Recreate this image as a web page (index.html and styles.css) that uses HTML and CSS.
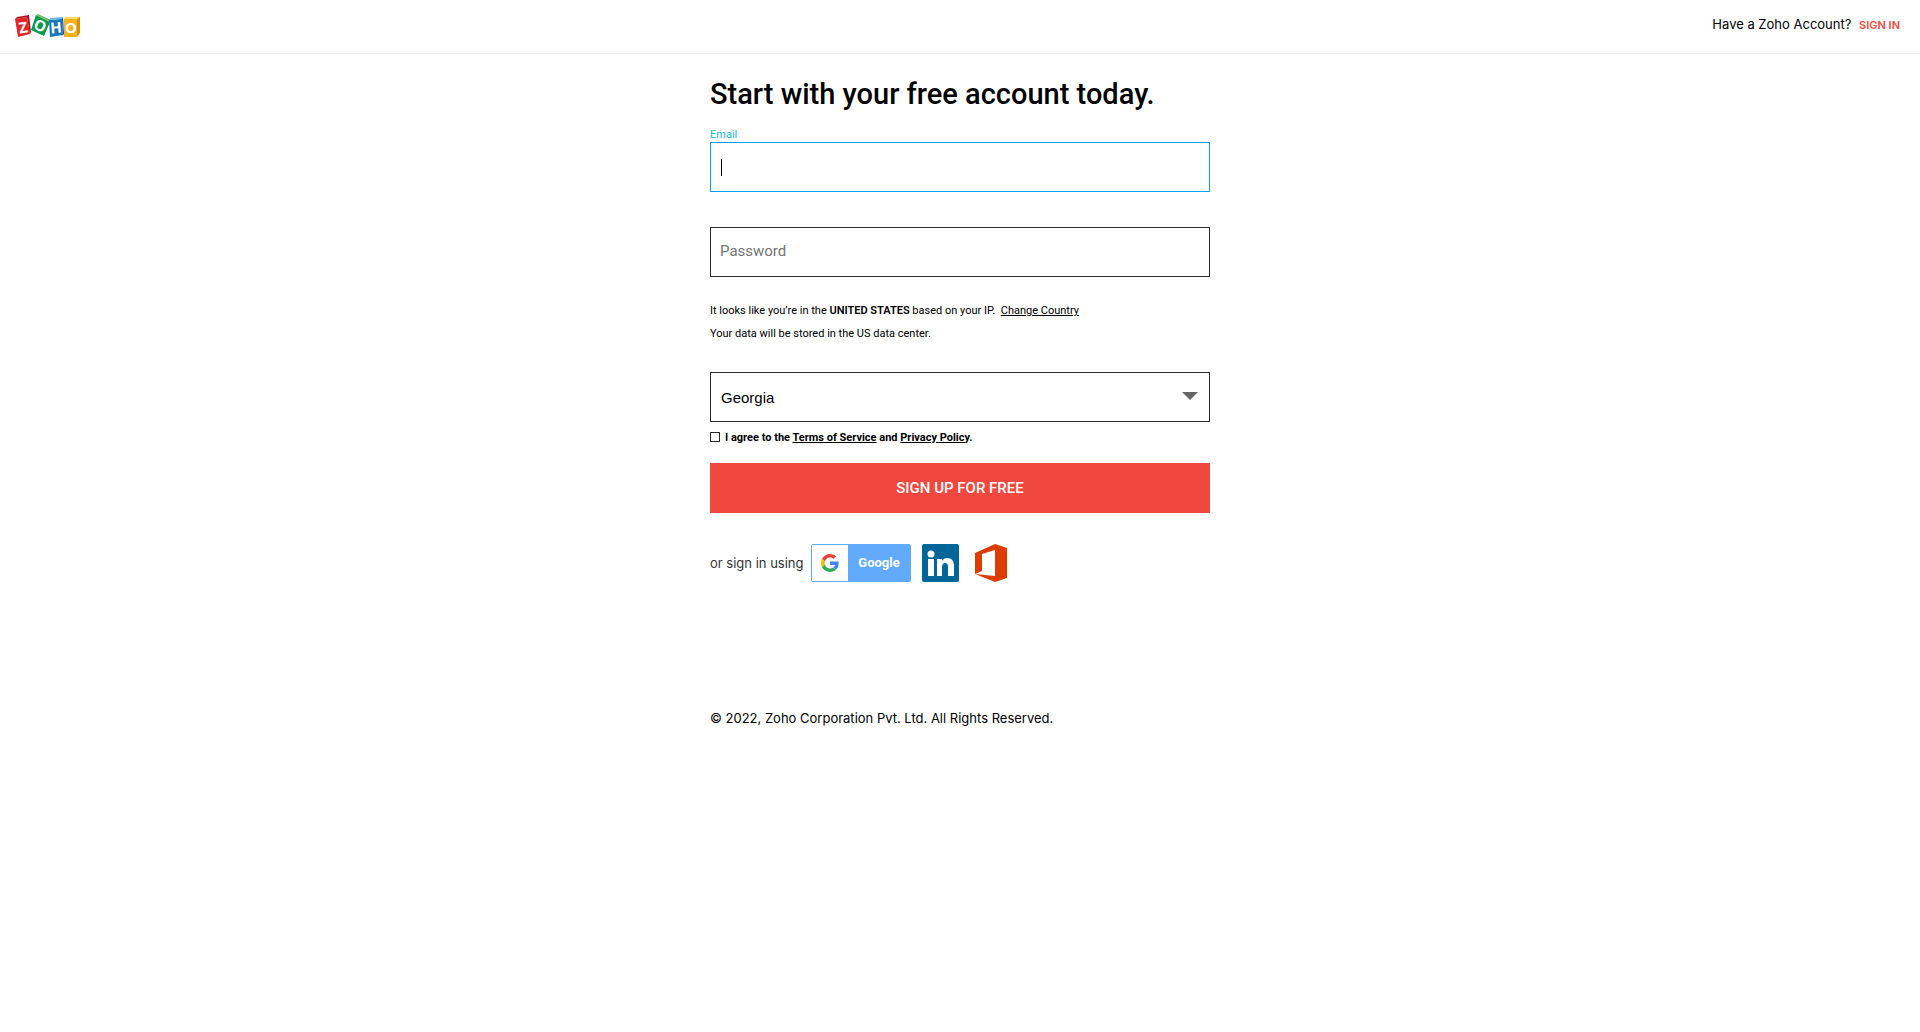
FILE: index.html
```html
<!DOCTYPE html>
<html lang="en">
<head>
    <meta charset="utf-8">
    <title>Zoho Sign Up</title>
    <link rel="stylesheet" href="styles.css">
</head>
<body>
    <header class="header">
        <a class="logo" href="index.html" aria-label="Zoho">
            <svg width="66" height="24" viewBox="0 0 66 24">
                <path fill="#e42527" d="M0 5l12-2 3 17-12 3z"/>
                <path fill="#a8141a" d="M0 5l2-2 12-2-2 2zM12 3l2-2 2 17-1 2z"/>
                <path fill="#089949" d="M21 1l14 7-6 14-13-6z"/>
                <path fill="#6dbb6b" d="M21 1l2-1 13 6-1 2z"/>
                <path fill="#1b75bb" d="M34 6l13-1 1 16-13 2z"/>
                <path fill="#6cb7e6" d="M34 6l1-2 13-1-1 2z"/>
                <path fill="#0b4f92" d="M47 5l1-2 1 17-1 1z"/>
                <path fill="#f9b21d" d="M49 5h13v18H49z"/>
                <path fill="#fdd768" d="M49 5l1-2h15l-3 2z"/>
                <path fill="#d98e10" d="M62 5l3-2v16l-3 4z"/>
                <text class="logo-letter" x="8" y="19" transform="rotate(-9 8 13)">Z</text>
                <text class="logo-letter" x="25" y="17" transform="rotate(25 25 12)">O</text>
                <text class="logo-letter" x="41" y="19" transform="rotate(-5 41 14)">H</text>
                <text class="logo-letter" x="56" y="19">O</text>
            </svg>
        </a>
        <p class="signin">Have a Zoho Account? <a href="#">SIGN IN</a></p>
    </header>

    <main class="signup">
        <h1>Start with your free account today.</h1>
        <form>
            <label class="field-label" for="email">Email</label>
            <div class="email-box">
                <input class="field" type="text" id="email" autofocus>
            </div>
            <input class="field password" type="password" placeholder="Password" aria-label="Password">

            <div class="location">
                <p>It looks like you’re in the <b>UNITED STATES</b> based on your IP. <a class="change" href="#">Change Country</a></p>
                <p>Your data will be stored in the US data center.</p>
            </div>

            <div class="select-box">
                <select class="field" aria-label="State">
                    <option>Georgia</option>
                </select>
            </div>

            <div class="agree">
                <input type="checkbox" id="tos">
                <label for="tos">I agree to the <a href="#">Terms of Service</a> and <a href="#">Privacy Policy</a>.</label>
            </div>

            <button class="submit" type="submit">SIGN UP FOR FREE</button>
        </form>

        <div class="social">
            <span class="social-text">or sign in using</span>
            <a class="google" href="#">
                <span class="google-icon">
                    <svg width="18" height="18" viewBox="0 0 48 48">
                        <path fill="#EA4335" d="M24 9.5c3.54 0 6.71 1.22 9.21 3.6l6.85-6.85C35.9 2.38 30.47 0 24 0 14.62 0 6.51 5.38 2.56 13.22l7.98 6.19C12.43 13.72 17.74 9.5 24 9.5z"/>
                        <path fill="#4285F4" d="M46.98 24.55c0-1.57-.15-3.09-.38-4.55H24v9.02h12.94c-.58 2.96-2.26 5.48-4.78 7.18l7.73 6c4.51-4.18 7.09-10.36 7.09-17.65z"/>
                        <path fill="#FBBC05" d="M10.53 28.59c-.48-1.45-.76-2.99-.76-4.59s.27-3.14.76-4.59l-7.98-6.19C.92 16.46 0 20.12 0 24s.92 7.54 2.56 10.78l7.97-6.19z"/>
                        <path fill="#34A853" d="M24 48c6.48 0 11.93-2.13 15.89-5.81l-7.73-6c-2.15 1.45-4.92 2.3-8.16 2.3-6.26 0-11.57-4.22-13.47-9.91l-7.98 6.19C6.51 42.62 14.62 48 24 48z"/>
                    </svg>
                </span>
                <span class="google-name">Google</span>
            </a>
            <a class="linkedin" href="#" aria-label="LinkedIn">
                <svg width="37" height="38" viewBox="0 0 37 38">
                    <rect width="37" height="38" rx="2" fill="#006699"/>
                    <circle cx="9" cy="10" r="3.5" fill="#fff"/>
                    <path fill="#fff" d="M6 15h6v17H6zM15 15h5v2c1-2 3-3 5-3 5 0 7 3 7 8v10h-6v-9c0-3-1-4-3-4s-3 2-3 4v9h-5z"/>
                </svg>
            </a>
            <a class="office" href="#" aria-label="Office">
                <svg width="32" height="38" viewBox="0 0 32 38">
                    <path fill="#dc3c00" d="M0 9L20 0l12 4v30l-12 4L0 30l20 2V6L7 10v17l-7 3z"/>
                </svg>
            </a>
        </div>

        <footer>© 2022, Zoho Corporation Pvt. Ltd. All Rights Reserved.</footer>
    </main>
</body>
</html>
```
FILE: styles.css
```css
* {
    box-sizing: border-box;
}
body {
    margin: 0;
    background: #fff;
    color: #000;
    font-family: Roboto, "Liberation Sans", sans-serif;
    font-size: 13px;
}
p, h1 {
    margin: 0;
}
.header {
    display: flex;
    justify-content: space-between;
    height: 54px;
    padding: 14px 20px 0 15px;
    border-bottom: 1px solid #eee;
}
.logo svg {
    display: block;
}
.logo-letter {
    fill: #fff;
    font-family: "Open Sans", sans-serif;
    font-size: 15px;
    font-weight: 700;
    text-anchor: middle;
}
.signin, .social, footer {
    font-family: Inter, "Liberation Sans", sans-serif;
    line-height: 20px;
}
.signin a {
    margin-left: 4px;
    color: #f0483e;
    font-size: 11px;
    font-weight: 600;
    text-decoration: none;
}
.signup {
    max-width: 500px;
    margin: 0 auto;
    padding-top: 20px;
}
h1 {
    font-size: 29px;
    font-weight: 500;
    line-height: 40px;
}
.field-label {
    display: block;
    margin-top: 14px;
    color: #19b5dc;
    font-size: 11px;
    line-height: 14px;
}
.field {
    display: block;
    width: 100%;
    height: 50px;
    padding: 0 10px;
    border: 1px solid #2b2b2b;
    border-radius: 0;
    background: #fff;
    color: #000;
    font-family: inherit;
    font-size: 15px;
    outline: none;
}
.field:focus {
    border-color: #00a0f0;
}
.field::placeholder {
    color: #757575;
}
.email-box {
    position: relative;
}
.email-box:focus-within::after {
    content: "";
    position: absolute;
    top: 17px;
    left: 11px;
    width: 1px;
    height: 17px;
    background: #000;
}
.email-box .field {
    caret-color: transparent;
}
.password {
    margin-top: 35px;
    padding: 0 9px 2px;
}
.location {
    margin-top: 22px;
    font-size: 11px;
    line-height: 23px;
}
.location b {
    font-weight: 600;
}
.location a, .agree a {
    color: #000;
    text-decoration: underline;
}
.location .change {
    margin-left: 3px;
}
.select-box {
    position: relative;
    margin-top: 27px;
}
.select-box .field {
    appearance: none;
    font-family: "Liberation Sans", Arial, sans-serif;
}
.select-box::after {
    content: "";
    position: absolute;
    top: 20px;
    right: 12px;
    border: 8px solid transparent;
    border-top-color: #666;
    border-bottom: 0;
    pointer-events: none;
}
.agree {
    display: flex;
    align-items: center;
    gap: 5px;
    height: 14px;
    margin-top: 8px;
    font-size: 11px;
    font-weight: 700;
}
.agree input {
    appearance: none;
    width: 10px;
    height: 10px;
    margin: 0;
    border: 1px solid #2b2b2b;
}
.submit {
    display: block;
    width: 100%;
    height: 50px;
    margin-top: 19px;
    border: none;
    background: #f0483e;
    color: #fff;
    font-family: inherit;
    font-size: 15px;
    font-weight: 500;
    cursor: pointer;
}
.social {
    display: flex;
    align-items: center;
    gap: 11px;
    margin-top: 31px;
    color: #333;
}
.social-text {
    width: 90px;
    white-space: nowrap;
}
.social svg {
    display: block;
}
.google {
    display: flex;
    width: 100px;
    height: 38px;
    border: 1px solid #62aafc;
    border-radius: 2px;
    background: #62aafc;
    text-decoration: none;
}
.google-icon {
    display: flex;
    align-items: center;
    justify-content: center;
    width: 36px;
    background: #fff;
}
.google-name {
    flex: 1;
    color: #fff;
    font-family: Roboto, sans-serif;
    font-size: 13px;
    font-weight: 700;
    line-height: 36px;
    text-align: center;
}
.office {
    margin-left: 5px;
}
footer {
    margin-top: 126px;
}
```
